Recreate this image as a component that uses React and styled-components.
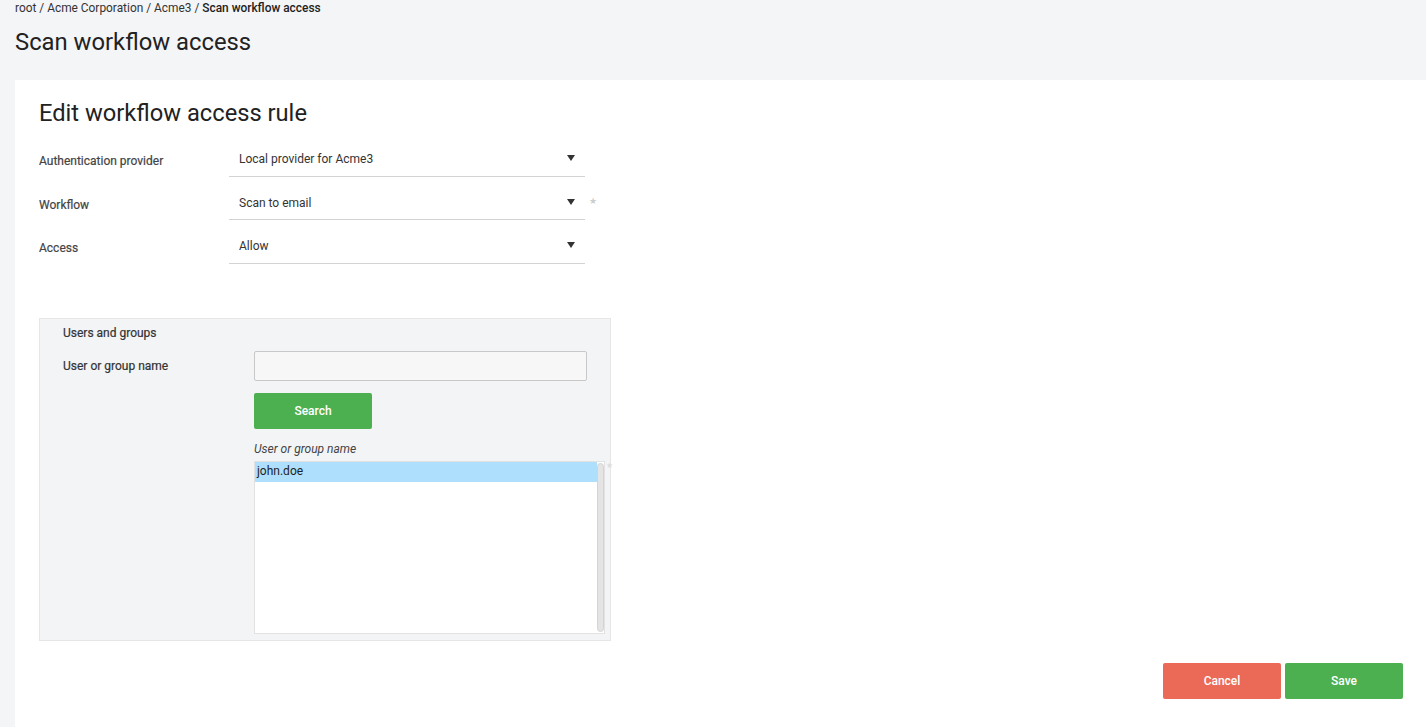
import React from 'react';
import styled, { createGlobalStyle } from 'styled-components';

const GlobalStyle = createGlobalStyle`
  html, body {
    margin: 0;
    padding: 0;
    background: #f4f5f7;
    font-family: Roboto, "Liberation Sans", Arial, sans-serif;
    color: #333;
  }
`;

const Page = styled.div`
  min-height: 727px;
  display: flex;
  flex-direction: column;
  padding-left: 15px;
  box-sizing: border-box;
`;

const Breadcrumb = styled.div`
  font-size: 11.9px;
  line-height: 16px;
  color: #333;
  height: 16px;
  b {
    font-weight: 500;
    color: #222;
  }
`;

const PageTitle = styled.h1`
  margin: 11px 0 0 0;
  font-size: 23.8px;
  font-weight: 400;
  line-height: 30px;
  color: #222;
  height: 53px;
`;

const Card = styled.div`
  flex: 1;
  background: #fff;
  padding: 18px 23px 28px 24px;
  display: flex;
  flex-direction: column;
`;

const CardTitle = styled.h2`
  margin: 0 0 5px 0;
  font-size: 23.7px;
  font-weight: 400;
  line-height: 30px;
  color: #222;
`;

const FormRow = styled.div`
  display: flex;
  align-items: stretch;
  height: 43.5px;
`;

const Label = styled.div`
  width: 190px;
  font-size: 12px;
  line-height: 14px;
  color: #444;
  font-weight: 400;
  padding-top: 21px;
  -webkit-text-stroke: 0.2px #444;
`;

const Select = styled.div`
  width: 356px;
  box-sizing: border-box;
  border-bottom: 1px solid #d3d3d3;
  display: flex;
  justify-content: space-between;
  align-items: flex-start;
  padding: 19px 10px 0 10px;
  font-size: 12px;
  line-height: 14px;
  color: #333;
`;

const Arrow = styled.span`
  width: 0;
  height: 0;
  margin-top: 3px;
  border-left: 4px solid transparent;
  border-right: 4px solid transparent;
  border-top: 6px solid #333;
`;

const Star = styled.span`
  font-size: 9px;
  color: #ccc;
  margin-left: 4px;
  padding-top: 19px;
`;

const Panel = styled.div`
  margin-top: 54px;
  width: 572px;
  box-sizing: border-box;
  background: #f3f4f6;
  border: 1px solid #e6e6e6;
  padding: 6px 0 6px 23px;
`;

const PanelTitle = styled.div`
  font-size: 12px;
  font-weight: 400;
  color: #333;
  line-height: 16px;
  -webkit-text-stroke: 0.2px #333;
`;

const PanelRow = styled.div`
  display: flex;
  margin-top: ${p => p.$mt || 0}px;
`;

const PanelLabel = styled.div`
  width: 191px;
  flex-shrink: 0;
  font-size: 12px;
  font-weight: 400;
  color: #333;
  padding-top: 8px;
  -webkit-text-stroke: 0.2px #333;
`;

const PanelCol = styled.div`
  display: flex;
  flex-direction: column;
  min-width: 0;
`;

const TextInput = styled.input`
  width: 333px;
  height: 30px;
  margin: 0;
  box-sizing: border-box;
  background: #f7f7f7;
  border: 1px solid #c8c8c8;
  border-radius: 2px;
  outline: none;
`;

const Button = styled.button`
  width: 118px;
  height: 36px;
  border: none;
  border-radius: 2px;
  background: ${p => (p.$variant === 'cancel' ? '#ea6a57' : '#4caf50')};
  color: #fff;
  font-family: inherit;
  font-size: 12px;
  font-weight: 500;
  cursor: pointer;
  margin-top: ${p => p.$mt || 0}px;
`;

const ListCaption = styled.div`
  margin-top: 13px;
  font-size: 12px;
  font-style: italic;
  color: #444;
  line-height: 14px;
`;

const ListWrap = styled.div`
  display: flex;
  margin-top: 5px;
`;

const ListBox = styled.div`
  width: 351px;
  flex-shrink: 0;
  height: 173px;
  box-sizing: border-box;
  background: #fff;
  border: 1px solid #e2e2e2;
  display: flex;
`;

const Items = styled.div`
  flex: 1;
`;

const Item = styled.div`
  height: 20px;
  line-height: 19px;
  padding-left: 2px;
  font-size: 12px;
  color: #222;
  background: ${p => (p.$selected ? '#aee0fd' : 'transparent')};
`;

const Track = styled.div`
  width: 7px;
  margin: 1px 0 1px 0;
  border-radius: 4px;
  background: #e4e4e4;
  border: 1px solid #d4d4d4;
  box-sizing: border-box;
`;

const SmallStar = styled.span`
  font-size: 8px;
  color: #ddd;
  margin-left: 1px;
`;

const Footer = styled.div`
  margin-top: auto;
  display: flex;
  justify-content: flex-end;
  gap: 4px;
`;

export default function App() {
  return (
    <>
      <GlobalStyle />
      <Page>
        <Breadcrumb>
          root / Acme Corporation / Acme3 / <b>Scan workflow access</b>
        </Breadcrumb>
        <PageTitle>Scan workflow access</PageTitle>
        <Card>
          <CardTitle>Edit workflow access rule</CardTitle>
          <FormRow>
            <Label>Authentication provider</Label>
            <Select>
              Local provider for Acme3
              <Arrow />
            </Select>
          </FormRow>
          <FormRow>
            <Label>Workflow</Label>
            <Select>
              Scan to email
              <Arrow />
            </Select>
            <Star>★</Star>
          </FormRow>
          <FormRow>
            <Label>Access</Label>
            <Select>
              Allow
              <Arrow />
            </Select>
          </FormRow>

          <Panel>
            <PanelTitle>Users and groups</PanelTitle>
            <PanelRow $mt={10}>
              <PanelLabel>User or group name</PanelLabel>
              <PanelCol>
                <TextInput />
                <Button $mt={12}>Search</Button>
                <ListCaption>User or group name</ListCaption>
                <ListWrap>
                  <ListBox>
                    <Items>
                      <Item $selected>john.doe</Item>
                    </Items>
                    <Track />
                  </ListBox>
                  <SmallStar>★</SmallStar>
                </ListWrap>
              </PanelCol>
            </PanelRow>
          </Panel>

          <Footer>
            <Button $variant="cancel">Cancel</Button>
            <Button>Save</Button>
          </Footer>
        </Card>
      </Page>
    </>
  );
}
